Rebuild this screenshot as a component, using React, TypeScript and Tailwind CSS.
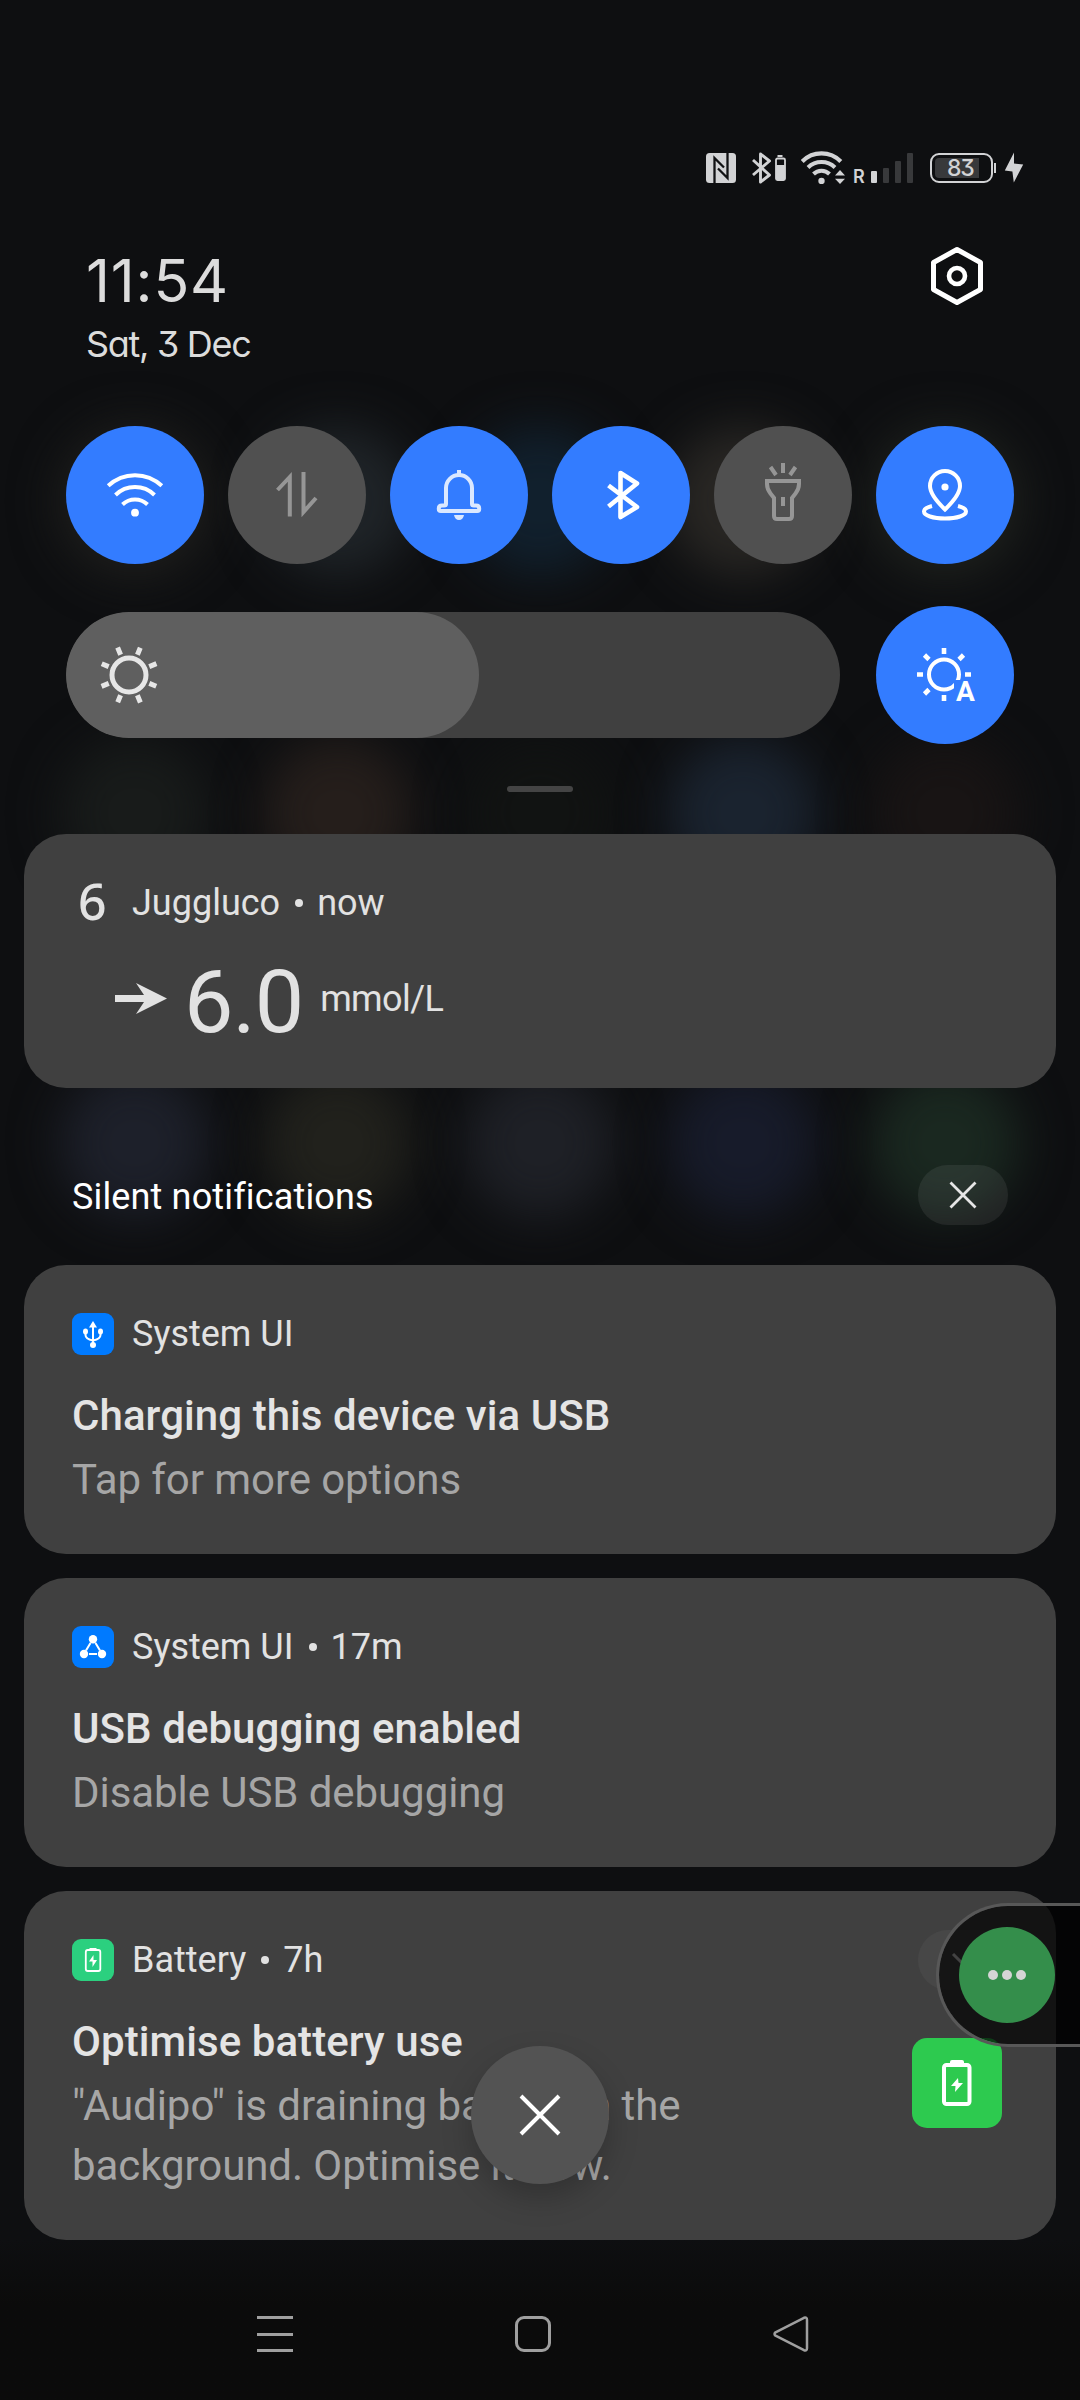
import type { ReactNode } from "react";

const backdropRows = [
  { top: "mt-[426px]", colors: ["bg-[#1f1f1d]", "bg-[#1f2428]", "bg-[#11202d]", "bg-[#292724]", "bg-[#1f221e]"] },
  { top: "mt-[162px]", colors: ["bg-[#181b1a]", "bg-[#251e1b]", "bg-[#111312]", "bg-[#1a232f]", "bg-[#181414]"] },
  { top: "mt-[180px]", colors: ["bg-[#1d202a]", "bg-[#21211c]", "bg-[#1e2026]", "bg-[#171b2a]", "bg-[#1a2820]"] },
];

function Backdrop() {
  return (
    <div className="absolute inset-0 -z-10 overflow-hidden">
      {backdropRows.map((row, i) => (
        <div key={i} className={`flex justify-between px-[60px] ${row.top}`}>
          {row.colors.map((c, j) => (
            <div key={j} className={`h-[150px] w-[150px] rounded-full blur-[24px] ${c}`} />
          ))}
        </div>
      ))}
    </div>
  );
}

function StatusBar() {
  return (
    <div className="flex h-[34px] items-start text-[#d2d3d5]">
      <svg width="30" height="30" viewBox="0 0 30 30" className="mt-[3px]">
        <rect width="30" height="30" rx="3.5" fill="currentColor" />
        <path d="M8.500 30V5L18 14.500M21.500 0V25L12 15.500" fill="none" stroke="#111214" strokeWidth="2.300" />
      </svg>
      <svg width="36" height="34" viewBox="0 0 36 34" className="ml-[15px]">
        <path d="M2 10L18.500 25 9.500 32V4L18.500 11 2 25" fill="none" stroke="currentColor" strokeWidth="2.900" strokeLinejoin="round" />
        <rect x="26.500" y="5" width="5" height="2" fill="currentColor" />
        <rect x="25" y="8.500" width="9" height="21.500" rx="1.500" fill="none" stroke="currentColor" strokeWidth="1.800" />
        <rect x="25" y="15" width="9" height="15" rx="1" fill="currentColor" />
      </svg>
      <svg width="46" height="34" viewBox="0 0 46 34" className="ml-[14px]" fill="none" stroke="currentColor">
        <path d="M1.200 11.500a27 27 0 0 1 38.600 0" strokeWidth="4.200" />
        <path d="M7 17.500a19.500 19.500 0 0 1 27 0" strokeWidth="4" />
        <path d="M12.500 24a11.500 11.500 0 0 1 16 0" strokeWidth="4" />
        <circle cx="20.500" cy="31" r="3.200" fill="currentColor" stroke="none" />
        <path d="M34 25.500l5-5.500 5 5.500zM34 28.800h10l-5 5.200z" fill="currentColor" stroke="none" />
      </svg>
      <span className="mt-[18px] ml-[6px] w-[18px] font-[Inter] text-[18px] leading-[18px] font-semibold">R</span>
      <div className="flex h-[33px] items-end gap-[6px]">
        <div className="h-[12px] w-[6px] rounded-[1px] bg-[#d2d3d5]" />
        <div className="h-[15px] w-[6px] rounded-[1px] bg-[#38393b]" />
        <div className="h-[22px] w-[6px] rounded-[1px] bg-[#38393b]" />
        <div className="h-[30px] w-[6px] rounded-[1px] bg-[#38393b]" />
      </div>
      <div className="mt-[3px] ml-[17px] flex h-[30px] w-[63px] rounded-[9px] border-2 border-current p-[3px]">
        <div className="flex h-[20px] w-[44px] items-center rounded-l-[4px] bg-[#38393b]">
          <span className="ml-[12px] font-[Inter] text-[23px] leading-[20px] font-medium tracking-[-1.2px] [font-feature-settings:'cv09']">83</span>
        </div>
      </div>
      <div className="mt-[13px] ml-px h-[10px] w-[2px] bg-[#d2d3d5]" />
      <svg width="20" height="31" viewBox="0 0 20 31" className="mt-[2px] ml-[8px]">
        <path d="M10 .5L.8 18.500l7.600 1 1.400 11L19.200 12.500l-9.200-1z" fill="currentColor" />
      </svg>
    </div>
  );
}

function Toggle({ on, children }: { on?: boolean; children: ReactNode }) {
  return (
    <div className={`flex h-[138px] w-[138px] shrink-0 items-center justify-center rounded-full ${on ? "bg-[#337cff] text-white" : "bg-[#505050] text-[#969696]"}`}>
      <svg width="72" height="72" viewBox="0 0 72 72" fill="none" stroke="currentColor" strokeWidth="4">
        {children}
      </svg>
    </div>
  );
}

function Card({ children, className = "" }: { children: ReactNode; className?: string }) {
  return <section className={`relative rounded-[42px] bg-[#404040] px-[48px] pt-[48px] ${className}`}>{children}</section>;
}

function Header({ icon, app, time }: { icon: ReactNode; app: string; time?: string }) {
  return (
    <div className="flex h-[42px] items-center text-[36px] leading-[42px] text-[#e2e2e2]">
      <div className="mr-[18px] h-[42px] w-[42px]">{icon}</div>
      <span>{app}</span>
      {time && (
        <>
          <span className="mr-[14px] ml-[15px] h-[8px] w-[8px] rounded-full bg-[#e2e2e2]" />
          <span>{time}</span>
        </>
      )}
    </div>
  );
}

function Body({ title, children }: { title: string; children: ReactNode }) {
  return (
    <div className="mt-[31px] text-[42px] leading-[60px]">
      <h2 className="font-medium tracking-[0.07px] text-[#e4e4e4]">{title}</h2>
      <p className="mt-[4px] tracking-[-0.07px] whitespace-nowrap text-[#a6a6a6]">{children}</p>
    </div>
  );
}

function UsbIcon() {
  return (
    <svg width="42" height="42" viewBox="0 0 42 42">
      <rect width="42" height="42" rx="9" fill="#007aff" />
      <g fill="none" stroke="#fff" strokeWidth="2">
        <path d="M21 13v19M13.500 19v3q0 4 7.500 5.500 7.500-1.500 7.500-5.500v-3" />
      </g>
      <path d="M21 8l4 6.500h-8z" fill="#fff" />
      <ellipse cx="13.500" cy="18.500" rx="2.500" ry="3" fill="#fff" />
      <ellipse cx="28.500" cy="18.500" rx="2.500" ry="3" fill="#fff" />
      <circle cx="21" cy="32" r="3" fill="#fff" />
    </svg>
  );
}

function NodesIcon() {
  return (
    <svg width="42" height="42" viewBox="0 0 42 42">
      <rect width="42" height="42" rx="9" fill="#007aff" />
      <path d="M18.500 17l-4.500 7.500M23.500 17l4.500 7.500M17 28h8" stroke="#fff" strokeWidth="2" />
      <circle cx="21" cy="13.200" r="4.200" fill="#fff" />
      <circle cx="12" cy="28" r="4.200" fill="#fff" />
      <circle cx="30" cy="28" r="4.200" fill="#fff" />
    </svg>
  );
}

function BatteryIcon() {
  return (
    <svg width="42" height="42" viewBox="0 0 42 42">
      <rect width="42" height="42" rx="9" fill="#2bd07f" />
      <path d="M17.500 9h7v2.500h-7z" fill="#fff" />
      <rect x="13.800" y="11" width="14.500" height="21" rx="2" fill="none" stroke="#fff" strokeWidth="1.800" />
      <path d="M21.500 16l-4.500 6.500h3.500v5.500l4.500-7h-3.500z" fill="#fff" />
    </svg>
  );
}

export default function App() {
  return (
    <main className="relative isolate flex h-[2400px] w-[1080px] flex-col overflow-hidden bg-[#0e0f11] pt-[150px] font-[Roboto,sans-serif]">
      <Backdrop />

      <div className="pl-[706px]">
        <StatusBar />
      </div>

      <header className="mt-[59px] flex h-[183px] items-start justify-between pr-[96px] pl-[86px] font-[Inter,sans-serif] text-[#dcdcdc]">
        <div>
          <div className="mt-[8px] text-[59px] leading-[60px] tracking-[0.8px]">11:54</div>
          <div className="mt-[11px] text-[36px] leading-[44px] tracking-[-1.3px] [font-feature-settings:'cv09','cv11']">Sat, 3 Dec</div>
        </div>
        <svg width="54" height="60" viewBox="0 0 54 60" fill="none" stroke="#fff" className="mt-[3px]">
          <path d="M27 3.500L50.500 16.500V43.500L27 56.500 3.500 43.500V16.500z" strokeWidth="5" strokeLinejoin="round" />
          <circle cx="27" cy="30" r="8" strokeWidth="4.600" />
        </svg>
      </header>

      <div className="flex justify-between px-[66px]">
        <Toggle on>
          <path d="M9.200 26.800a39 39 0 0 1 53.600 0M16.500 36a28 28 0 0 1 39 0M23.500 45.500a18 18 0 0 1 25 0" />
          <circle cx="36" cy="53.700" r="3.900" fill="currentColor" stroke="none" />
        </Toggle>
        <Toggle>
          <path d="M28.800 57.500V18L16.500 31M42.500 13v40L55 39" />
        </Toggle>
        <Toggle on>
          <g stroke="#dbe8ff">
            <path d="M36 11v5M23 45V29a13 13 0 0 1 26 0v16q0 1.500 2 1.500h2q3.200 0 3.200 3v.5q0 2-2 2H17.800q-2 0-2-2v-.5q0-3 3.200-3h2q2 0 2-1.500z" />
            <path d="M31 56h10q-1 5-5 5t-5-5z" fill="#dbe8ff" stroke="none" />
          </g>
        </Toggle>
        <Toggle on>
          <path d="M23.500 26.500L52 48 35.500 58V14L52 24.500 23.500 47.500" strokeWidth="4.600" strokeLinejoin="round" />
        </Toggle>
        <Toggle>
          <path d="M36 4v10M23.500 8l5.500 8M48.500 8L43 16M20 22h32v3q0 5-3.500 9.500L45 39v18q0 3-3 3H30q-3 0-3-3V39l-3.500-4.500Q20 30 20 25zM36 38v9" />
        </Toggle>
        <Toggle on>
          <path d="M36 50.500Q21 36 21 27a15 15 0 0 1 30 0q0 9-15 23.500zM23 47q-8 2-8 5.500c0 4 9 7 21 7s21-3 21-7q0-3.500-8-5.500" />
          <circle cx="36" cy="28" r="3.600" fill="currentColor" stroke="none" />
        </Toggle>
      </div>

      <div className="mt-[42px] flex items-center justify-between px-[66px]">
        <div className="h-[126px] w-[774px] overflow-hidden rounded-full bg-[#404040]">
          <div className="flex h-full w-[413px] items-center rounded-full bg-[#5f5f5f] pl-[31px]">
            <svg width="64" height="64" viewBox="0 0 64 64" fill="none" stroke="#e6e6e6" strokeWidth="5">
              <circle cx="32" cy="32" r="17" />
              <g transform="rotate(22.500 32 32)">
                <path d="M32 2.500v7.500M32 54v7.500M2.500 32H10M54 32h7.500M11 11l5.500 5.500M47.500 47.500L53 53M53 11L47.500 16.500M16.500 47.500L11 53" />
              </g>
            </svg>
          </div>
        </div>
        <div className="relative">
          <Toggle on>
            <circle cx="35" cy="35.500" r="15" />
            <path d="M35 9v6M35 56v6M8 35.500h6M56 35.500h6M15.500 16l4.500 4.500M54.500 16L50 20.500M15.500 55l4.500-4.500" strokeWidth="4.600" />
          </Toggle>
          <span className="absolute top-[74px] left-[78px] bg-[#337cff] pl-[2px] text-[28px] leading-[24px] font-bold text-white">A</span>
        </div>
      </div>

      <div className="mx-auto mt-[42px] h-[6px] w-[66px] rounded-full bg-[#444]" />

      <div className="mt-[42px] flex flex-col px-[24px]">
        <Card className="h-[254px]">
          <Header app="Juggluco" time="now" icon={<span className="block pl-[6px] -mt-[2px] font-['Noto_Sans'] text-[50px] leading-[42px] font-medium">6</span>} />
          <div className="mt-[39px] flex h-[78px] items-center pl-[43px] text-[#e2e2e2]">
            <svg width="52" height="31" viewBox="0 0 52 31" className="-mt-[8px]">
              <path d="M0 12h29L21 0l31 15.500L21 31l8-12H0z" fill="currentColor" />
            </svg>
            <span className="ml-[17px] text-[88px] leading-[78px] tracking-[-1px]">6.0</span>
            <span className="-mt-[6px] ml-[17px] text-[36px] leading-[42px] tracking-[-0.6px]">mmol/L</span>
          </div>
        </Card>

        <div className="flex h-[177px] items-center justify-between px-[48px] pt-[38px] pb-[1px]">
          <h1 className="mt-[3px] text-[36px] leading-[42px] tracking-[0.15px] text-white">Silent notifications</h1>
          <button className="flex h-[60px] w-[90px] items-center justify-center rounded-full bg-white/7">
            <svg width="28" height="28" viewBox="0 0 28 28" stroke="#e6e6e6" strokeWidth="2.800">
              <path d="M1.500 1.500l25 25M26.500 1.500l-25 25" />
            </svg>
          </button>
        </div>

        <div className="flex flex-col gap-[24px]">
          <Card className="h-[289px]">
            <Header app="System UI" icon={<UsbIcon />} />
            <Body title="Charging this device via USB">Tap for more options</Body>
          </Card>
          <Card className="h-[289px]">
            <Header app="System UI" time="17m" icon={<NodesIcon />} />
            <Body title="USB debugging enabled">Disable USB debugging</Body>
          </Card>
          <Card className="h-[349px]">
            <Header app="Battery" time="7h" icon={<BatteryIcon />} />
            <Body title="Optimise battery use">
              "Audipo" is draining battery in the
              <br />
              background. Optimise it now.
            </Body>
            <div className="absolute top-[39px] right-[48px] flex h-[60px] w-[90px] items-center justify-center rounded-full bg-[#474747]">
              <svg width="24" height="16" viewBox="0 0 24 16" fill="none" stroke="#e2e2e2" strokeWidth="3">
                <path d="M2 2l10 10L22 2" />
              </svg>
            </div>
            <svg width="90" height="90" viewBox="0 0 90 90" className="absolute top-[147px] right-[54px]">
              <rect width="90" height="90" rx="15" fill="#2dca4f" />
              <rect x="38" y="22" width="14" height="7" rx="2" fill="#fff" />
              <rect x="32" y="27" width="25.500" height="39" rx="2.500" fill="none" stroke="#fff" strokeWidth="4" />
              <path d="M46 40l-7 8h4.500l-.5 6 8-9h-4.500z" fill="#fff" />
            </svg>
          </Card>
        </div>
      </div>

      <nav className="flex h-[160px] items-center bg-linear-to-b from-[#0e0f11] to-[#0b0b0b] to-40% pt-[28px] pl-[257px] text-[#9f9f9f]">
        <div className="flex h-[36px] w-[36px] flex-col justify-between">
          <div className="h-[3px] bg-current" />
          <div className="h-[3px] bg-current" />
          <div className="h-[3px] bg-current" />
        </div>
        <div className="ml-[222px] h-[36px] w-[36px] rounded-[9px] border-3 border-current" />
        <svg width="36" height="36" viewBox="0 0 36 36" className="ml-[222px]" fill="none" stroke="currentColor" strokeWidth="2.500" strokeLinejoin="round">
          <path d="M2.500 16.300L31 1.800q3-1 3 2v28.400q0 3-3 2L2.500 19.700q-2-1.700 0-3.400z" />
        </svg>
      </nav>

      <button className="absolute top-[2046px] left-[471px] flex h-[138px] w-[138px] items-center justify-center rounded-full bg-[#535353] shadow-[0_14px_30px_rgba(0,0,0,0.22)]">
        <svg width="42" height="42" viewBox="0 0 42 42" stroke="#fff" strokeWidth="4">
          <path d="M2 2l38 38M40 2L2 40" />
        </svg>
      </button>

      <div className="absolute top-[1903px] right-0 flex h-[144px] w-[144px] items-center rounded-l-full border-3 border-r-0 border-[#585858] bg-black/70 bg-clip-padding pl-[20px]">
        <div className="flex h-[96px] w-[96px] items-center justify-center gap-[4px] rounded-full bg-[#348e4b]">
          <span className="h-[10px] w-[10px] rounded-full bg-[#d5d5d5]" />
          <span className="h-[10px] w-[10px] rounded-full bg-[#d5d5d5]" />
          <span className="h-[10px] w-[10px] rounded-full bg-[#d5d5d5]" />
        </div>
      </div>
    </main>
  );
}
